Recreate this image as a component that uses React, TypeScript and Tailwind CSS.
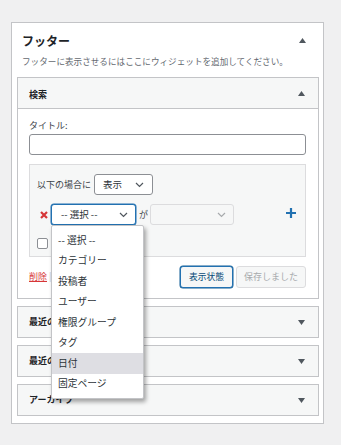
import React from "react";

const font = { fontFamily: '"Noto Sans CJK JP", "Noto Sans", sans-serif' };

function Arrow({ up }: { up?: boolean }) {
  return (
    <svg width="7" height="5" viewBox="0 0 7 5" className="shrink-0">
      {up ? (
        <polygon points="0,5 7,5 3.5,0" fill="#50575e" />
      ) : (
        <polygon points="0,0 7,0 3.5,5" fill="#50575e" />
      )}
    </svg>
  );
}

function Chevron({ color = "#50575e" }: { color?: string }) {
  return (
    <svg width="9" height="6" viewBox="0 0 9 6" className="shrink-0">
      <path d="M1 1 L4.5 4.5 L8 1" fill="none" stroke={color} strokeWidth="1.2" />
    </svg>
  );
}

function CollapsedWidget({ title }: { title: string }) {
  return (
    <div className="mt-[7px] h-[32px] border border-[#c3c4c7] bg-[#f6f7f7] flex items-center justify-between pl-[11px] pr-[13px]">
      <span className="text-[9px] font-bold text-[#1d2327]">{title}</span>
      <Arrow />
    </div>
  );
}

const options = [
  "-- 選択 --",
  "カテゴリー",
  "投稿者",
  "ユーザー",
  "権限グループ",
  "タグ",
  "日付",
  "固定ページ",
];

export default function App() {
  return (
    <div className="w-[341px] h-[445px] bg-[#f0f0f1] pt-[22px] overflow-hidden" style={font}>
      <div className="ml-[11px] w-[313px] border border-[#c3c4c7] bg-white pb-[7px]">
        {/* Sidebar header */}
        <div className="pl-[10px] pr-[17px] pt-[9px] flex items-center justify-between">
          <h2 className="text-[12px] leading-[17px] font-bold text-[#1d2327]">フッター</h2>
          <Arrow up />
        </div>
        <p className="pl-[10px] text-[8.6px] leading-[12px] mt-[6px] text-[#646970] whitespace-nowrap">
          フッターに表示させるにはここにウィジェットを追加してください。
        </p>

        {/* Search widget */}
        <div className="ml-[5px] w-[302px] mt-[10px] border border-[#c3c4c7] bg-white">
          <div className="h-[31px] bg-[#f6f7f7] border-b border-[#c3c4c7] flex items-center justify-between pl-[11px] pr-[13px]">
            <span className="text-[9px] font-bold text-[#1d2327] mt-[3px]">検索</span>
            <Arrow up />
          </div>
          <div className="pl-[11px] pr-[12px] pt-[11px] pb-[10px]">
            <label className="block text-[9px] leading-[12px] text-[#3c434a]">タイトル:</label>
            <div className="mt-[2px] h-[21px] w-full border border-[#8c8f94] rounded-[3px] bg-white" />

            {/* Conditions */}
            <div className="mt-[9px] h-[93px] border border-[#dcdcde] bg-[#f6f7f7] pl-[7px] pr-[9px] pt-[9px]">
              <div className="flex items-center">
                <span className="text-[9px] text-[#3c434a] w-[57px]">以下の場合に</span>
                <div className="h-[21px] w-[59px] border border-[#8c8f94] rounded-[3px] bg-white flex items-center justify-between pl-[8px] pr-[8px]">
                  <span className="text-[9.5px] text-[#2c3338]">表示</span>
                  <Chevron />
                </div>
              </div>

              <div className="flex items-center mt-[9px]">
                <svg width="8" height="8" viewBox="0 0 8 8" className="ml-[3px] mr-[3px]">
                  <path d="M1 1 L7 7 M7 1 L1 7" stroke="#d63638" strokeWidth="2.2" />
                </svg>
                <div className="relative">
                  <div className="h-[21px] w-[85px] border border-[#2271b1] shadow-[0_0_0_0.5px_#2271b1] rounded-[3px] bg-white flex items-center justify-between pl-[9px] pr-[7px]">
                    <span className="text-[9.5px] text-[#2c3338]">-- 選択 --</span>
                    <Chevron />
                  </div>
                  {/* Open dropdown */}
                  <div className="absolute left-0 top-[21px] w-[93px] bg-white border border-[#c3c4c7] rounded-[2px] shadow-[2px_3px_4px_rgba(0,0,0,0.35)] pt-[4px] pb-[4px] z-10">
                    {options.map((o) => (
                      <div
                        key={o}
                        className={`h-[20.5px] flex items-center pl-[6px] text-[9.75px] text-[#2c3338] ${o === "日付" ? "bg-[#dedee3]" : ""}`}
                      >
                        {o}
                      </div>
                    ))}
                  </div>
                </div>
                <span className="text-[9px] text-[#3c434a] ml-[3px] mr-[2px]">が</span>
                <div className="h-[21px] w-[84px] border border-[#dcdcde] rounded-[3px] bg-[#f6f7f7] flex items-center justify-end pr-[7px]">
                  <Chevron color="#a7aaad" />
                </div>
                <svg width="10" height="10" viewBox="0 0 10 10" className="ml-auto -mt-[3px]">
                  <path d="M5 0 V10 M0 5 H10" stroke="#2271b1" strokeWidth="2.2" />
                </svg>
              </div>

              <div className="mt-[13px] w-[11px] h-[11px] border border-[#8c8f94] rounded-[2px] bg-white" />
            </div>

            {/* Footer actions */}
            <div className="mt-[9px] flex items-center">
              <span className="text-[9px] text-[#d63638] underline">削除</span>
              <span className="text-[9px] text-[#c3c4c7] ml-[2px]">|</span>
              <div className="ml-auto flex items-center gap-[3px]">
                <div className="h-[22px] w-[53px] border border-[#2271b1] shadow-[0_0_0_0.5px_#135e96] rounded-[3px] bg-[#f6f7f7] flex items-center justify-center text-[8.75px] text-[#0a4b78]">
                  表示状態
                </div>
                <div className="h-[22px] w-[70px] border border-[#dcdcde] rounded-[3px] bg-[#f6f7f7] flex items-center justify-center text-[9px] text-[#a7aaad]">
                  保存しました
                </div>
              </div>
            </div>
          </div>
        </div>

        <div className="ml-[5px] w-[302px]">
          <CollapsedWidget title="最近の投稿" />
          <CollapsedWidget title="最近のコメント" />
          <CollapsedWidget title="アーカイブ" />
        </div>
      </div>
    </div>
  );
}
